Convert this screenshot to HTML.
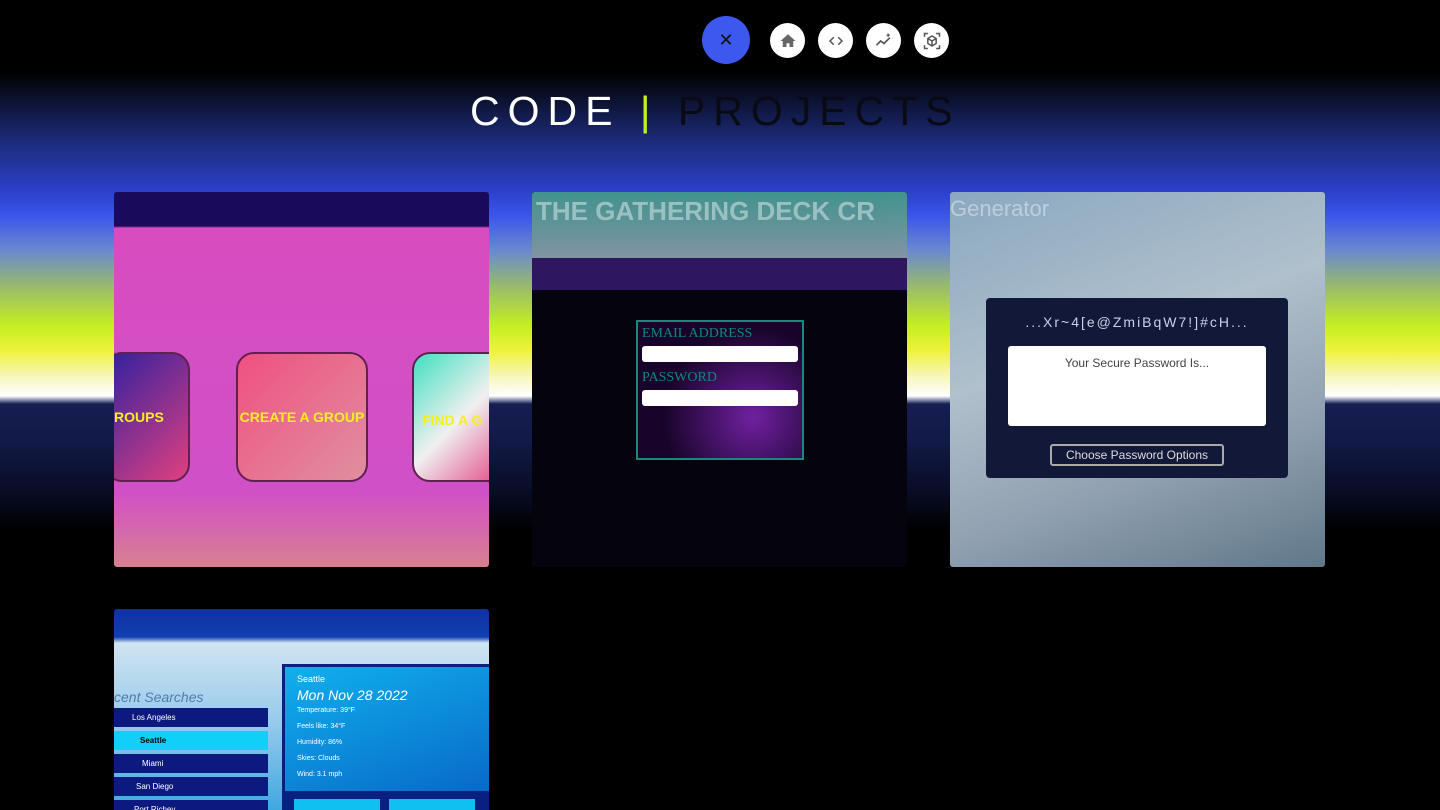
<!DOCTYPE html>
<html style="width:1440px;height:810px;overflow:hidden;background:#000"><head><style>
*{margin:0;padding:0;box-sizing:border-box}
body{width:1440px;height:810px;overflow:hidden;font-family:"Liberation Sans",sans-serif;
background:linear-gradient(to bottom,#000 0px,#000 72px,#0c1230 100px,#1c2a78 140px,#2a40c8 190px,#3a54ec 215px,#6a88d0 250px,#98b870 285px,#c4ee22 325px,#eef23a 350px,#f8f8c8 380px,#fff 396px,#8890b0 400px,#161e52 404px,#121a48 440px,#070a1e 500px,#000 530px,#000 810px) no-repeat;position:relative}
.c{position:absolute;border-radius:50%;display:flex;align-items:center;justify-content:center}
.x{left:702px;top:16px;width:48px;height:48px;background:#3d58ee;color:#111;font-size:18px}
.w{width:35px;height:35px;background:#fff;top:23px}
.title{position:absolute;top:88px;left:470px;font-size:41px;letter-spacing:8px;font-weight:300;white-space:nowrap;color:#fff}
.card{position:absolute;width:375px;height:375px;border-radius:3px;overflow:hidden}
</style></head><body>
<div class="c x">✕</div>
<div class="c w" style="left:770px"><svg width="18" height="18" viewBox="0 0 24 24"><path d="M12 3L2 12h3v8h5v-5h4v5h5v-8h3z" fill="#666"/></svg></div>
<div class="c w" style="left:818px"><svg width="18" height="18" viewBox="0 0 24 24" fill="none" stroke="#555" stroke-width="2"><path d="M9 7l-5 5 5 5M15 7l5 5-5 5"/></svg></div>
<div class="c w" style="left:866px"><svg width="20" height="20" viewBox="0 0 24 24" fill="none" stroke="#555" stroke-width="2"><path d="M3 17l5-5 4 3 7-7"/><path d="M17 3v4M15 5h4" stroke-width="1.5"/></svg></div>
<div class="c w" style="left:914px"><svg width="20" height="20" viewBox="0 0 24 24" fill="none" stroke="#555" stroke-width="1.8"><path d="M3 7V3h4M17 3h4v4M21 17v4h-4M7 21H3v-4"/><path d="M12 6l5 3v6l-5 3-5-3V9z M7 9l5 3 5-3M12 12v6"/></svg></div>
<div class="title">CODE <span style="color:#c4ee22">|</span> <span style="color:#0a0a14">PROJECTS</span></div>

<div class="card" style="left:114px;top:192px;background:linear-gradient(180deg,#1a0a5c 0,#1a0a5c 34px,#d84cc0 36px,#d050c8 300px,#d88090 375px)">
 <div style="position:absolute;left:-10px;top:160px;width:86px;height:130px;border-radius:18px;background:linear-gradient(135deg,#3020a0,#e04080);border:2px solid #602050"></div>
 <div style="position:absolute;left:122px;top:160px;width:132px;height:130px;border-radius:18px;background:linear-gradient(135deg,#f05080,#e090a0);border:2px solid #602050;display:flex;align-items:center;justify-content:center;color:#f4f020;font-weight:bold;font-size:14px">CREATE A GROUP</div>
 <div style="position:absolute;left:298px;top:160px;width:100px;height:130px;border-radius:18px;background:linear-gradient(135deg,#40e0c0,#f0f0f0,#e04080);border:2px solid #602050;color:#f4f020;font-weight:bold;font-size:14px;padding:58px 8px">FIND A G</div>
 <div style="position:absolute;left:0;top:217px;color:#f4f020;font-weight:bold;font-size:14px">ROUPS</div>
</div>

<div class="card" style="left:532px;top:192px;background:#05040e">
 <div style="height:66px;background:linear-gradient(180deg,#50b8b0,#a0b8c8);color:#c0f0f0;font-size:26px;font-weight:bold;padding:4px;white-space:nowrap;opacity:.8">THE GATHERING DECK CR</div>
 <div style="height:32px;background:#2e1660"></div>
 <div style="position:absolute;left:104px;top:128px;width:168px;height:140px;border:2px solid #1a8878;background:radial-gradient(circle at 70% 70%,#7020a0,#18042a 60%);padding:4px">
  <div style="color:#108878;font-size:14px;font-family:'Liberation Serif',serif">EMAIL ADDRESS</div>
  <div style="background:#fff;height:16px;border-radius:3px;margin:4px 0 8px"></div>
  <div style="color:#108878;font-size:14px;font-family:'Liberation Serif',serif">PASSWORD</div>
  <div style="background:#fff;height:16px;border-radius:3px;margin:4px 0"></div>
 </div>
</div>

<div class="card" style="left:950px;top:192px;background:linear-gradient(160deg,#8aa8c0,#b0c0cc 40%,#90a0b0 70%,#607888)">
 <div style="color:#d0dce8;font-size:22px;padding:4px 0 0 0;opacity:.7">Generator</div>
 <div style="position:absolute;left:36px;top:106px;width:302px;height:180px;background:#121838;border-radius:4px">
  <div style="color:#c8d0e8;font-size:14px;letter-spacing:2px;text-align:center;margin-top:16px">...Xr~4[e@ZmiBqW7!]#cH...</div>
  <div style="position:absolute;left:22px;top:48px;width:258px;height:80px;background:#fff;border-radius:3px;color:#444;font-size:12px;text-align:center;padding-top:10px">Your Secure Password Is...</div>
  <div style="position:absolute;left:64px;top:146px;width:174px;height:22px;border:2px solid #aaa;border-radius:3px;color:#ddd;font-size:12px;text-align:center;line-height:18px">Choose Password Options</div>
 </div>
</div>

<div class="card" style="left:114px;top:609px;height:201px;border-radius:3px 3px 0 0;background:linear-gradient(180deg,#1030a0 0,#1040b0 28px,#d0e4f0 34px,#90c8ec 120px,#40a8e0 201px)">
 <div style="position:absolute;left:168px;top:55px;width:220px;height:130px;background:linear-gradient(160deg,#10b0ec,#0868c8);border:3px solid #0a2080;padding:4px 12px;color:#fff;font-size:7px;line-height:16px">
  <div style="font-size:9px">Seattle</div><div style="font-size:14px;font-style:italic">Mon Nov 28 2022</div>
  Temperature: 39°F<br>Feels like: 34°F<br>Humidity: 86%<br>Skies: Clouds<br>Wind: 3.1 mph
 </div>
 <div style="position:absolute;left:168px;top:184px;width:220px;height:20px;background:#0a2080"></div>
 <div style="position:absolute;left:180px;top:190px;width:86px;height:20px;background:#10c0f0"></div>
 <div style="position:absolute;left:275px;top:190px;width:86px;height:20px;background:#10c0f0"></div>
 <div style="position:absolute;left:0;top:99px;width:154px;color:#fff;font-size:8px">
  <div style="background:#0c1a80;height:19px;margin-bottom:4px;line-height:19px;padding-left:18px">Los Angeles</div>
  <div style="background:#10d0f8;color:#000;height:19px;margin-bottom:4px;line-height:19px;padding-left:26px;font-weight:bold">Seattle</div>
  <div style="background:#0c1a80;height:19px;margin-bottom:4px;line-height:19px;padding-left:28px">Miami</div>
  <div style="background:#0c1a80;height:19px;margin-bottom:4px;line-height:19px;padding-left:22px">San Diego</div>
  <div style="background:#0c1a80;height:19px;line-height:19px;padding-left:20px">Port Richey</div>
 </div>
 <div style="position:absolute;left:0;top:80px;color:#1a4080;font-size:14px;font-style:italic;opacity:.6">cent Searches</div>
</div>
</body></html>
